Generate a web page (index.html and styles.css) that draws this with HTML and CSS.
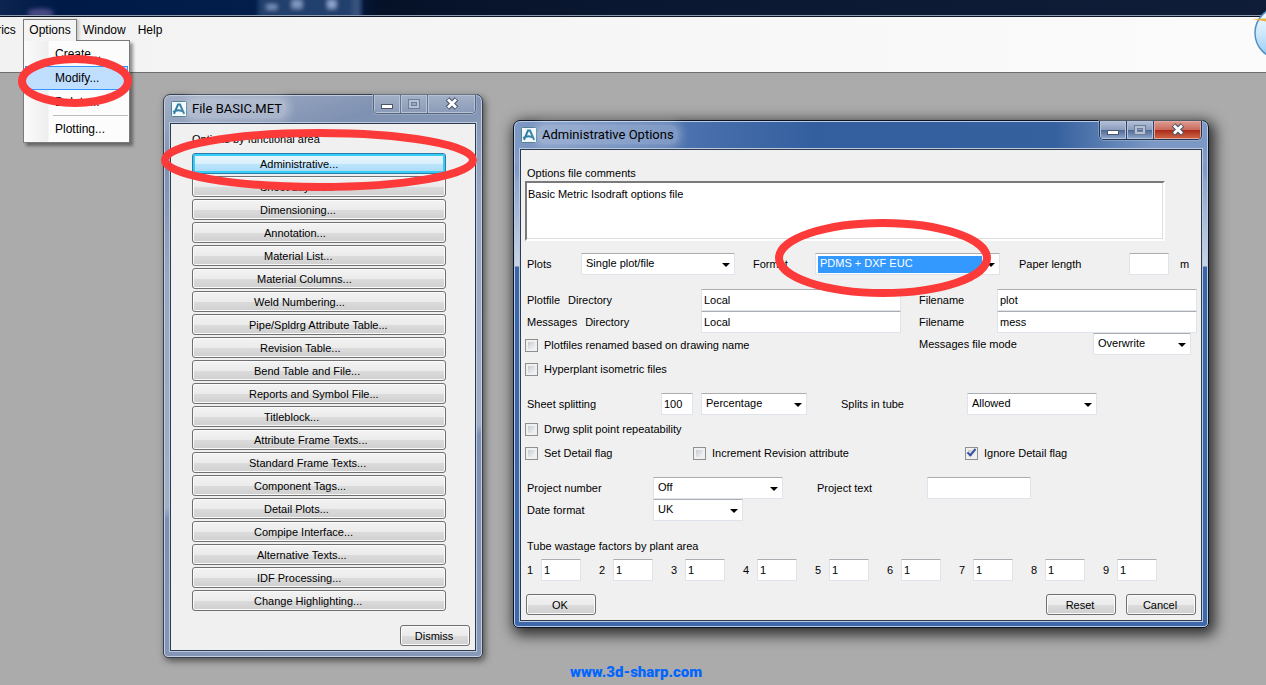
FILE: index.html
```html
<!DOCTYPE html>
<html lang="en">
<head>
<meta charset="utf-8">
<title>Isodraft Options</title>
<link rel="stylesheet" href="styles.css">
</head>
<body>
<div class="app">
  <div class="glass">
    <svg class="glass-art" width="400" height="16" viewBox="0 0 400 16" aria-hidden="true">
      <defs><filter id="soft" x="-50%" y="-50%" width="200%" height="200%"><feGaussianBlur stdDeviation="2.5"/></filter></defs>
      <g filter="url(#soft)">
        <rect x="262" y="-8" width="108" height="32" rx="4" fill="#213f6d"/>
        <rect x="362" y="-4" width="10" height="28" fill="#34527f"/>
        <ellipse cx="30" cy="14" rx="14" ry="5" fill="#4a4a86"/>
        <rect x="271" y="5" width="11" height="5" fill="#7f99c4"/>
        <rect x="298" y="0" width="11" height="9" fill="#7f99c4"/>
        <rect x="336" y="0" width="9" height="9" fill="#8fa9d4"/>
      </g>
    </svg>
  </div>
  <nav class="menubar">
    <button class="menu menu-cut" type="button">rics</button>
    <div class="menu-holder">
      <button class="menu menu-open" type="button">Options</button>
      <div class="dropdown">
        <button type="button">Create...</button>
        <button type="button" class="hot">Modify...</button>
        <button type="button">Delete...</button>
        <hr>
        <button type="button">Plotting...</button>
      </div>
    </div>
    <button class="menu" type="button">Window</button>
    <button class="menu" type="button">Help</button>
  </nav>
  <svg class="orb" width="14" height="56" viewBox="0 0 14 56" aria-hidden="true">
    <defs><linearGradient id="orbfill" x1="0" y1="0" x2="0" y2="1"><stop offset="0" stop-color="#fff"/><stop offset=".55" stop-color="#c9e6fb"/><stop offset="1" stop-color="#8cc8f4"/></linearGradient></defs>
    <circle cx="29" cy="27" r="26" fill="url(#orbfill)" stroke="#5590c4" stroke-width="1.500"/>
    <path d="M0 13 L14 12.500 V15.500 Z" fill="#eeb13c"/>
  </svg>

  <main class="desktop">
    <section class="window window-file" aria-label="File BASIC.MET">
      <header class="titlebar">
        <svg class="app-icon" width="16" height="16" viewBox="0 0 16 16" aria-hidden="true"><rect x=".5" y=".5" width="15" height="15" rx="1" fill="#f3f8fa" stroke="#4f8294"/><path d="M3 12.800 L7 3.500 H9 L13.200 12.800 M2.200 11 C6 8.300 9 8.600 13 11" fill="none" stroke="#2f7fa6" stroke-width="2"/></svg>
        <h1 class="title">File BASIC.MET</h1>
        <div class="controls">
          <button type="button" aria-label="Minimize"><svg width="14" height="14" viewBox="0 0 14 14"><rect x="1.500" y="7.500" width="11" height="4" fill="#fff" stroke="#4c566b"/></svg></button>
          <button type="button" aria-label="Maximize" disabled><svg width="14" height="14" viewBox="0 0 14 14"><rect x="3" y="4" width="8" height="6" fill="none" stroke="#6f7f9a" stroke-width="4"/><rect x="3" y="4" width="8" height="6" fill="none" stroke="#b5c0d2" stroke-width="2"/></svg></button>
          <button type="button" class="close" aria-label="Close"><svg width="14" height="14" viewBox="0 0 14 14"><path d="M2.500 2 L11.500 11 M11.500 2 L2.500 11" stroke="#4c566b" stroke-width="5"/><path d="M3 2.500 L11 10.500 M11 2.500 L3 10.500" stroke="#fff" stroke-width="2.800"/></svg></button>
        </div>
      </header>
      <div class="client file-client">
        <p class="caption">Options by functional area</p>
        <div class="area-list">
          <button type="button" class="btn area-d focused">Administrative...</button>
          <button type="button" class="btn area-d">Sheet Layout...</button>
          <button type="button" class="btn area-d">Dimensioning...</button>
          <button type="button" class="btn area-e">Annotation...</button>
          <button type="button" class="btn area-e">Material List...</button>
          <button type="button" class="btn area-c">Material Columns...</button>
          <button type="button" class="btn area-b">Weld Numbering...</button>
          <button type="button" class="btn area-a">Pipe/Spldrg Attribute Table...</button>
          <button type="button" class="btn area-d">Revision Table...</button>
          <button type="button" class="btn area-b">Bend Table and File...</button>
          <button type="button" class="btn area-a">Reports and Symbol File...</button>
          <button type="button" class="btn area-e">Titleblock...</button>
          <button type="button" class="btn area-b">Attribute Frame Texts...</button>
          <button type="button" class="btn area-a">Standard Frame Texts...</button>
          <button type="button" class="btn area-b">Component Tags...</button>
          <button type="button" class="btn area-e">Detail Plots...</button>
          <button type="button" class="btn area-b">Compipe Interface...</button>
          <button type="button" class="btn area-c">Alternative Texts...</button>
          <button type="button" class="btn area-c">IDF Processing...</button>
          <button type="button" class="btn area-b">Change Highlighting...</button>
        </div>
        <button type="button" class="btn action dismiss">Dismiss</button>
      </div>
    </section>

    <section class="window window-admin active" aria-label="Administrative Options">
      <header class="titlebar">
        <svg class="app-icon" width="16" height="16" viewBox="0 0 16 16" aria-hidden="true"><rect x=".5" y=".5" width="15" height="15" rx="1" fill="#f3f8fa" stroke="#4f8294"/><path d="M3 12.800 L7 3.500 H9 L13.200 12.800 M2.200 11 C6 8.300 9 8.600 13 11" fill="none" stroke="#2f7fa6" stroke-width="2"/></svg>
        <h1 class="title">Administrative Options</h1>
        <div class="controls">
          <button type="button" aria-label="Minimize"><svg width="14" height="14" viewBox="0 0 14 14"><rect x="1.500" y="7.500" width="11" height="4" fill="#fff" stroke="#4c566b"/></svg></button>
          <button type="button" aria-label="Maximize" disabled><svg width="14" height="14" viewBox="0 0 14 14"><rect x="3" y="4" width="8" height="6" fill="none" stroke="#6f7f9a" stroke-width="4"/><rect x="3" y="4" width="8" height="6" fill="none" stroke="#b5c0d2" stroke-width="2"/></svg></button>
          <button type="button" class="close" aria-label="Close"><svg width="14" height="14" viewBox="0 0 14 14"><path d="M2.500 2 L11.500 11 M11.500 2 L2.500 11" stroke="#4c566b" stroke-width="5"/><path d="M3 2.500 L11 10.500 M11 2.500 L3 10.500" stroke="#fff" stroke-width="2.800"/></svg></button>
        </div>
      </header>
      <form class="client admin-client">
        <label class="caption" for="comments">Options file comments</label>
        <textarea id="comments" class="comments" spellcheck="false">Basic Metric Isodraft options file</textarea>

        <div class="row row-plots">
          <label for="plots">Plots</label>
          <span class="pick"><select id="plots"><option>Single plot/file</option></select></span>
          <label for="format">Format</label>
          <span class="pick selected"><select id="format"><option>PDMS + DXF EUC</option></select></span>
          <label for="paper">Paper length</label>
          <input id="paper" type="text">
          <span>m</span>
        </div>

        <div class="row row-files section">
          <label for="plotdir"><span class="kind">Plotfile</span>Directory</label>
          <input id="plotdir" type="text" value="Local">
          <label for="plotname">Filename</label>
          <input id="plotname" type="text" value="plot">
        </div>
        <div class="row row-files">
          <label for="messdir"><span class="kind">Messages</span>Directory</label>
          <input id="messdir" type="text" value="Local">
          <label for="messname">Filename</label>
          <input id="messname" type="text" value="mess">
        </div>
        <div class="row row-mode">
          <label class="check"><input type="checkbox">Plotfiles renamed based on drawing name</label>
          <label for="mode">Messages file mode</label>
          <span class="pick"><select id="mode"><option>Overwrite</option></select></span>
        </div>
        <div class="row spaced"><label class="check"><input type="checkbox">Hyperplant isometric files</label></div>

        <div class="row row-split section">
          <label for="split">Sheet splitting</label>
          <input id="split" type="text" value="100">
          <span class="pick"><select aria-label="Sheet splitting unit"><option>Percentage</option></select></span>
          <label for="tube">Splits in tube</label>
          <span class="pick"><select id="tube"><option>Allowed</option></select></span>
        </div>
        <div class="row spaced"><label class="check"><input type="checkbox">Drwg split point repeatability</label></div>
        <div class="row row-flags spaced">
          <label class="check"><input type="checkbox">Set Detail flag</label>
          <label class="check"><input type="checkbox">Increment Revision attribute</label>
          <label class="check"><input type="checkbox" checked>Ignore Detail flag</label>
        </div>

        <div class="row row-project section">
          <label for="projno">Project number</label>
          <span class="pick"><select id="projno"><option>Off</option></select></span>
          <label for="projtext">Project text</label>
          <input id="projtext" type="text">
        </div>
        <div class="row row-date">
          <label for="date">Date format</label>
          <span class="pick"><select id="date"><option>UK</option></select></span>
        </div>

        <div class="row section"><span>Tube wastage factors by plant area</span></div>
        <div class="factors">
          <label>1<input type="text" value="1"></label>
          <label>2<input type="text" value="1"></label>
          <label>3<input type="text" value="1"></label>
          <label>4<input type="text" value="1"></label>
          <label>5<input type="text" value="1"></label>
          <label>6<input type="text" value="1"></label>
          <label>7<input type="text" value="1"></label>
          <label>8<input type="text" value="1"></label>
          <label>9<input type="text" value="1"></label>
        </div>
        <div class="actions">
          <button type="button" class="btn action ok">OK</button>
          <button type="button" class="btn action">Reset</button>
          <button type="button" class="btn action">Cancel</button>
        </div>
      </form>
    </section>
    <a class="site" href="#">www.3d-sharp.com</a>
  </main>

  <svg class="ring ring-menu" width="114" height="52" aria-hidden="true"><ellipse cx="57" cy="26" rx="53" ry="22"/></svg>
  <svg class="ring ring-area" width="316" height="62" aria-hidden="true"><ellipse cx="158" cy="31" rx="154" ry="27"/></svg>
  <svg class="ring ring-format" width="216" height="78" aria-hidden="true"><ellipse cx="108" cy="39" rx="104" ry="35"/></svg>
</div>
</body>
</html>
```

FILE: styles.css
```css
* { box-sizing: border-box; }

body {
  margin: 0;
  font: 11px/14px "Liberation Sans", Arial, sans-serif;
  color: #000;
}

button, input, select, textarea {
  font: inherit;
  color: inherit;
  margin: 0;
}

.app {
  position: relative;
  display: flex;
  flex-direction: column;
  min-height: 100vh;
  overflow: hidden;
  background: #ababab;
}

/* Aero glass strip */
.glass {
  height: 17px;
  background: linear-gradient(90deg, #0b2450 0, #001a47 60px, #031f4c 340px, #041127 380px, #0a1730 600px, #101d38 100%);
  border-bottom: 1px solid #0a1426;
  box-shadow: inset 0 -1px #8d99ad;
  overflow: hidden;
}
.glass-art { display: block; height: 15px; }

/* Menu bar */
.menubar {
  display: flex;
  align-items: flex-start;
  height: 56px;
  padding-top: 2px;
  background: linear-gradient(90deg, #f2f2f2, #fbfbfb);
  border-bottom: 1px solid #6e6e6e;
  font-size: 12px;
}
.menu {
  height: 22px;
  padding: 0 5px;
  border: 1px solid transparent;
  background: none;
}
.menu-cut {
  width: 26px;
  margin-left: -3px;
  padding: 0 7px 0 0;
  border: 0;
}
.menu-holder { position: relative; }
.menu-open {
  display: block;
  width: 54px;
  background: #f4f4f4;
  border-color: #7a7a7a #7a7a7a #f4f4f4;
  box-shadow: 2px 0 3px #0003;
}
.dropdown {
  position: absolute;
  z-index: 5;
  top: 21px;
  left: 0;
  display: flex;
  flex-direction: column;
  width: 107px;
  padding: 1px;
  background: linear-gradient(90deg, #fbfbfb, #eee 24px, #fcfcfc 25px);
  border: 1px solid #7a7a7a;
  box-shadow: 3px 3px 3px #0006;
}
.dropdown button {
  height: 24px;
  padding: 0 0 0 29px;
  border: 1px solid transparent;
  background: none;
  text-align: left;
}
.dropdown .hot { background: #c0defe; border-color: #3396ff; }
.dropdown hr {
  width: 75px;
  margin: 1px 0 1px auto;
  border: 0;
  border-top: 1px solid #bdbdbd;
}
.menu-open::after {
  content: "";
  position: absolute;
  z-index: 6;
  left: 1px;
  top: 21px;
  width: 52px;
  height: 1px;
  background: #f4f4f4;
}
.orb { position: absolute; top: 6px; right: 0; }

/* Windows */
.desktop { position: relative; flex: 1; }
.window {
  position: absolute;
  display: flex;
  flex-direction: column;
  padding: 0 6px 6px;
  border: 1px solid #363e4d;
  border-radius: 7px 7px 5px 5px;
  background: linear-gradient(165deg, #a3afc6, #7f91b2 70px, #99a8c2 180px, #a0aec6 400px, #7c90b4 410px, #8799b9);
  box-shadow: inset 0 0 0 1px #c3cddd, 2px 3px 7px #0008;
}
.window-file { left: 163px; top: 21px; width: 320px; }
.window-admin { left: 513px; top: 47px; width: 696px; }
.active {
  border-color: #0b1420;
  background:
    linear-gradient(#0000 28px, #8fa7cd 60px, #c8d4e6 145px, #3a66a7 146px, #3d68aa) left / 7px 100% no-repeat,
    linear-gradient(#0000 28px, #8fa7cd 60px, #c8d4e6 145px, #3a66a7 146px, #3d68aa) right / 7px 100% no-repeat,
    linear-gradient(#0000 40px, #3d68aa 60px),
    linear-gradient(90deg, #7f99c5, #4a70ad 180px, #345f9e 300px, #36619f 78%, #7c98c4 92%);
  box-shadow: inset 0 0 0 1px #b9cbe6, 3px 4px 14px 3px #000b;
}
.titlebar {
  display: flex;
  align-items: flex-start;
  height: 28px;
}
.app-icon { margin: 6px 0 0 1px; flex: none; }
.title {
  margin: 4px 0 0 1px;
  padding: 0 4px;
  border-radius: 8px;
  font: 13px/19px Roboto, "Open Sans", sans-serif;
  background: #fff4;
  box-shadow: 0 0 8px 4px #fff4;
}
.controls {
  display: flex;
  margin-left: auto;
  border: 1px solid #566580;
  border-top: 0;
  border-radius: 0 0 5px 5px;
  overflow: hidden;
  box-shadow: 0 0 0 1px #b9c5d966;
}
.controls button {
  display: grid;
  place-items: center;
  width: 27px;
  height: 18px;
  padding: 0;
  border: 0;
  border-right: 1px solid #66758f;
  background: linear-gradient(#a3b0c7, #8b9bb8);
  box-shadow: inset 0 0 0 1px #b7c2d5;
}
.controls .close { width: 47px; border-right: 0; }
.active .controls { border-color: #1f3657; }
.active .controls button { background: linear-gradient(#b4c1d8, #8c9dbd 48%, #526b96 52%, #8ea9d2); border-right-color: #2c456b; }
.active .controls .close { background: linear-gradient(#dd9f94, #cb6a5c 48%, #ab2c1c 52%, #cf6a48); box-shadow: inset 0 0 0 1px #e6a79c; }
.client {
  border: 1px solid #2e3a50;
  outline: 1px solid #bccadf;
  background: #f0f0f0;
}

/* File window */
.file-client {
  display: flex;
  flex-direction: column;
  padding: 8px 5px 4px 21px;
}
.caption { margin: 0; display: block; }
.area-list {
  display: grid;
  gap: 2px;
  margin: 7px 24px 0 0;
}
.btn {
  height: 21px;
  border: 1px solid #707070;
  border-radius: 3px;
  background: linear-gradient(#f3f3f3, #ebebeb 50%, #dcdcdc 51%, #cfcfcf);
  box-shadow: inset 0 0 0 1px #fafafa;
}
.area-list .btn { text-align: left; }
.area-list .area-a { padding-left: 56px; }
.area-list .area-b { padding-left: 61px; }
.area-list .area-c { padding-left: 64px; }
.area-list .area-d { padding-left: 67px; }
.area-list .area-e { padding-left: 71px; }
.area-list .focused {
  border-color: #2f7ba8;
  background: linear-gradient(#eaf6fd, #d9f0fc 50%, #bee6fd 51%, #a7d9f5);
  box-shadow: inset 0 0 0 2px #35cdf5;
}
.action { width: 70px; padding: 0 2px 0 0; }
.dismiss { align-self: flex-end; margin-top: 14px; }

/* Administrative form */
.admin-client { padding: 16px 4px 5px 4px; }
.admin-client > .caption { padding-left: 2px; }
.comments {
  display: block;
  width: 640px;
  height: 60px;
  margin-top: 1px;
  padding: 4px 1px;
  border: 2px solid;
  border-color: #7a7a7a #fff #fff #7a7a7a;
  background: #fff;
  box-shadow: inset -1px -1px #dedede;
  resize: none;
  overflow: hidden;
}
.row {
  display: grid;
  align-items: center;
  height: 22px;
  padding-left: 2px;
}
.row-plots { margin-top: 12px; grid-template-columns: 54px 154px 18px 62px 185px 19px 110px 40px 11px 1fr; }
.row-plots > :nth-child(3) { grid-column: 4; }
.row-plots > :nth-child(5) { grid-column: 7; }
.row-plots > :nth-child(7) { grid-column: 10; }
.row-files { grid-template-columns: 174px 200px 18px 78px 200px; }
.row-files > :nth-child(3) { grid-column: 4; }
.row-mode { grid-template-columns: 392px 174px 98px; }
.row-split { grid-template-columns: 134px 32px 8px 106px 34px 126px 130px; }
.row-split > :nth-child(3) { grid-column: 4; }
.row-split > :nth-child(4) { grid-column: 6; }
.row-flags { grid-template-columns: 168px 272px 1fr; }
.row-project, .row-date { grid-template-columns: 126px 130px 34px 110px 104px; }
.row-project > :nth-child(3) { grid-column: 4; }
.row-date { grid-template-columns: 126px 90px; }
.section { margin-top: 14px; }
.spaced { margin-top: 2px; }
.kind { margin-right: 8px; }

input[type="text"], select {
  width: 100%;
  height: 22px;
  border: 1px solid #dfe3eb;
  border-top-color: #abadb3;
  border-radius: 1px;
  background: #fff;
}
input[type="text"] { padding: 0 2px; }
.pick { position: relative; display: block; }
.pick::after {
  content: "";
  position: absolute;
  right: 5px;
  top: 10px;
  border: 4px solid transparent;
  border-top-color: #000;
  border-bottom: 0;
  pointer-events: none;
}
select {
  display: block;
  appearance: none;
  padding: 0 16px 2px 4px;
}
.selected select {
  color: #fff;
  background: linear-gradient(#3399ff, #3399ff) 2px 2px / 164px 17px no-repeat #fff;
}
.check {
  display: flex;
  align-items: center;
  gap: 6px;
  margin-left: -2px;
  padding-top: 2px;
}
.check input {
  appearance: none;
  display: grid;
  place-items: center;
  width: 13px;
  height: 13px;
  padding: 2px;
  border: 1px solid #8e8f8f;
  background: linear-gradient(135deg, #c6cbd2, #f4f5f6) content-box #f4f4f4;
}
.check input:checked::after {
  content: "";
  box-sizing: border-box;
  width: 5px;
  height: 9px;
  margin-top: -3px;
  border: solid #3b50a0;
  border-width: 0 2px 2px 0;
  transform: rotate(40deg);
}
.factors {
  display: flex;
  gap: 18px;
  padding-left: 2px;
  margin-top: 2px;
}
.factors label {
  display: grid;
  grid-template-columns: 14px 40px;
  align-items: center;
}
.actions {
  display: flex;
  gap: 10px;
  margin-top: 13px;
  padding: 0 1px;
}
.ok { margin-right: auto; }

.site {
  position: absolute;
  left: 570px;
  bottom: 3px;
  color: #0166ff;
  font: 900 15px/20px Impact, Roboto, sans-serif;
  text-decoration: none;
}

/* Callout ellipses */
.ring {
  position: absolute;
  z-index: 10;
  fill: none;
  stroke: #fb3a39;
  stroke-width: 8px;
  pointer-events: none;
}
.ring-menu { left: 18px; top: 55px; }
.ring-area { left: 161px; top: 129px; }
.ring-format { left: 775px; top: 219px; }
```
